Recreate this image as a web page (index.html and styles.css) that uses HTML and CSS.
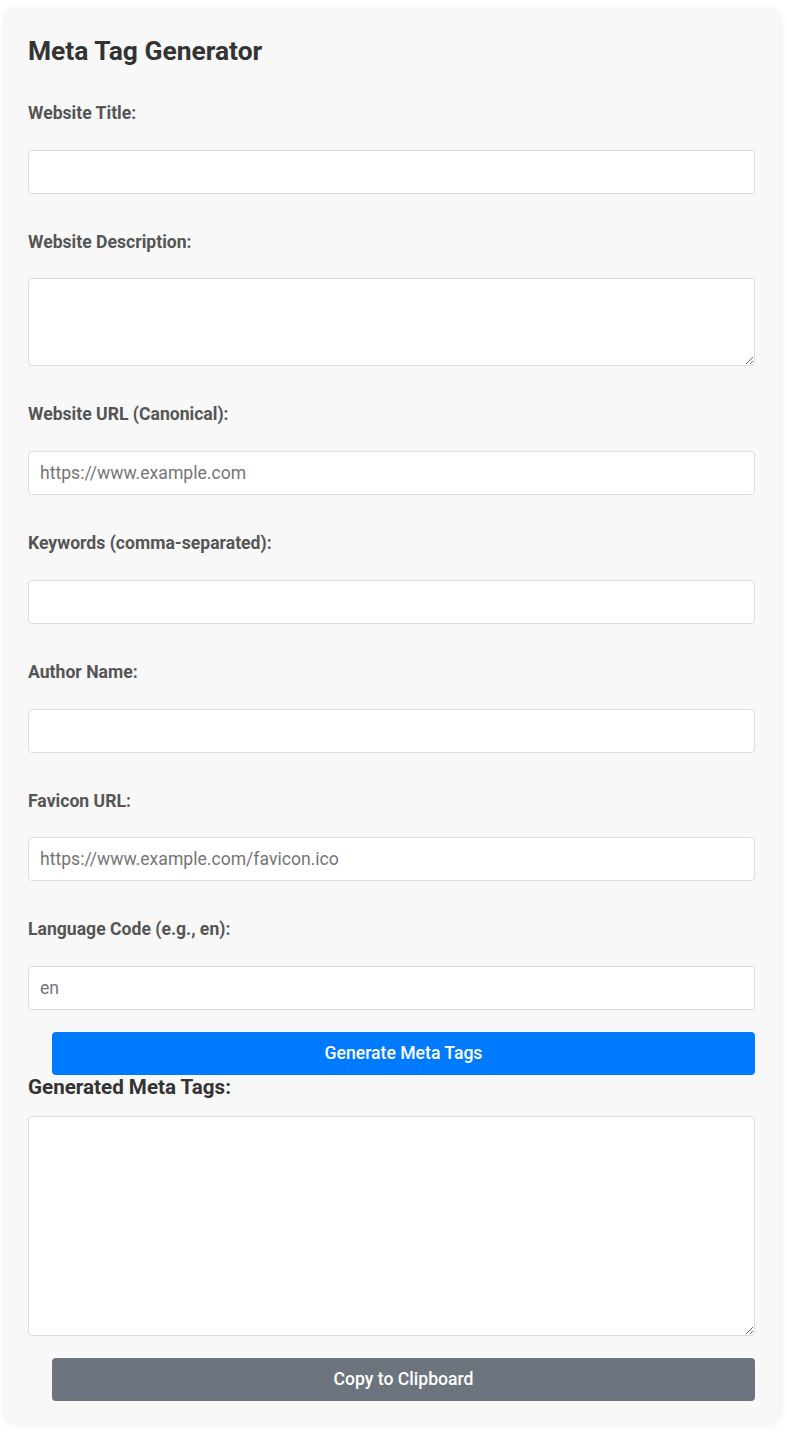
FILE: index.html
```html
<!DOCTYPE html>
<html lang="en">
<head>
<meta charset="utf-8">
<title>Meta Tag Generator</title>
<link rel="stylesheet" href="styles.css">
</head>
<body>
<div class="card">
  <h1 class="title">Meta Tag Generator</h1>
  <label class="field-label" for="t">Website Title:</label>
  <input class="field" id="t" type="text">
  <label class="field-label" for="d">Website Description:</label>
  <textarea class="field area-desc" id="d"></textarea>
  <label class="field-label" for="u">Website URL (Canonical):</label>
  <input class="field" id="u" type="text" placeholder="https://www.example.com">
  <label class="field-label" for="k">Keywords (comma-separated):</label>
  <input class="field" id="k" type="text">
  <label class="field-label" for="a">Author Name:</label>
  <input class="field" id="a" type="text">
  <label class="field-label" for="f">Favicon URL:</label>
  <input class="field" id="f" type="text" placeholder="https://www.example.com/favicon.ico">
  <label class="field-label" for="l">Language Code (e.g., en):</label>
  <input class="field" id="l" type="text" placeholder="en">
  <button class="btn btn-primary" type="button">Generate Meta Tags</button>
  <h3 class="out-title">Generated Meta Tags:</h3>
  <textarea class="field area-out" readonly></textarea>
  <button class="btn btn-secondary" type="button">Copy to Clipboard</button>
</div>
</body>
</html>
```
FILE: styles.css
```css
html, body {
  margin: 0;
  padding: 0;
  background: #ffffff;
}
body {
  font-family: Roboto, "Liberation Sans", sans-serif;
  font-size: 17.6px;
  color: #333;
}
.card {
  margin: 11px 8px 11px 6px;
  padding: 20px 24px 22px 22px;
  background: #f8f8f8;
  border-radius: 10px;
  box-shadow: 0 0 10px rgba(0, 0, 0, 0.1);
}
.title {
  margin: 5px 0 0;
  font-size: 26.4px;
  font-weight: 700;
  color: #333;
  line-height: 30px;
}
.field-label {
  display: block;
  margin-top: 39px;
  margin-bottom: 27px;
  font-size: 17.6px;
  font-weight: 700;
  color: #555;
  line-height: 18.7px;
}
.title + .field-label {
  margin-top: 38px;
}
.field {
  display: block;
  box-sizing: border-box;
  width: 100%;
  height: 44px;
  margin: 0;
  padding: 10px 11px;
  border: 1px solid #ddd;
  border-radius: 4px;
  background: #fff;
  font-family: Roboto, "Liberation Sans", sans-serif;
  font-size: 17.6px;
  color: #333;
}
.field::placeholder {
  color: #757575;
}
.area-desc {
  height: 88px;
  resize: vertical;
}
.area-out {
  height: 220px;
  resize: vertical;
}
.btn {
  display: block;
  box-sizing: border-box;
  width: calc(100% - 24px);
  margin-left: 24px;
  height: 43px;
  border: none;
  border-radius: 4px;
  color: #fff;
  font-family: Roboto, "Liberation Sans", sans-serif;
  font-size: 17.6px;
  font-weight: 500;
  cursor: pointer;
}
.btn-primary {
  margin-top: 22px;
  background: #007bff;
}
.btn-secondary {
  margin-top: 22px;
  background: #6c757d;
}
.out-title {
  margin: 0 0 17px;
  font-size: 20.6px;
  font-weight: 700;
  color: #333;
  line-height: 24px;
}
```
